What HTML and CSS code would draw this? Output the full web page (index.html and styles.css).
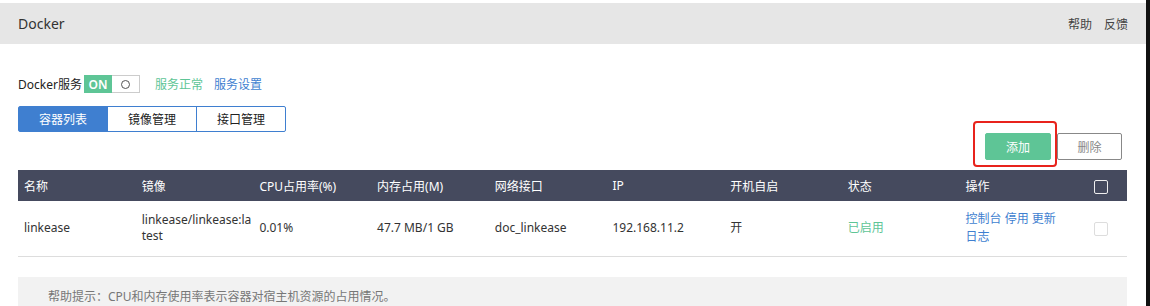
FILE: index.html
```html
<!DOCTYPE html>
<html lang="zh-CN">
<head>
    <meta charset="UTF-8">
    <title>Docker</title>
    <link rel="stylesheet" href="styles.css">
</head>
<body>
    <div class="page">
        <div class="topbar">
            <span class="topbar-title">Docker</span>
            <div class="topbar-links">
                <a>帮助</a>
                <a>反馈</a>
            </div>
        </div>

        <div class="content">
            <div class="service-row">
                <span class="service-label">Docker服务</span>
                <span class="switch">
                    <span class="switch-on">ON</span>
                    <span class="switch-off"><i class="switch-dot"></i></span>
                </span>
                <span class="service-ok">服务正常</span>
                <a class="service-link">服务设置</a>
            </div>

            <div class="tabs">
                <span class="tab active">容器列表</span>
                <span class="tab">镜像管理</span>
                <span class="tab">接口管理</span>
            </div>

            <div class="toolbar">
                <span class="btn-wrap">
                    <button class="btn btn-add">添加</button>
                    <span class="highlight"></span>
                </span>
                <button class="btn btn-del">删除</button>
            </div>

            <table class="grid">
                <thead>
                    <tr>
                        <th>名称</th>
                        <th>镜像</th>
                        <th>CPU占用率(%)</th>
                        <th>内存占用(M)</th>
                        <th>网络接口</th>
                        <th>IP</th>
                        <th>开机自启</th>
                        <th>状态</th>
                        <th>操作</th>
                        <th class="col-check"><span class="check check-head"></span></th>
                    </tr>
                </thead>
                <tbody>
                    <tr>
                        <td>linkease</td>
                        <td class="col-image">linkease/linkease:latest</td>
                        <td>0.01%</td>
                        <td>47.7 MB/1 GB</td>
                        <td>doc_linkease</td>
                        <td>192.168.11.2</td>
                        <td>开</td>
                        <td class="state-on">已启用</td>
                        <td class="col-ops"><a>控制台</a> <a>停用</a> <a>更新</a> <a>日志</a></td>
                        <td class="col-check"><span class="check"></span></td>
                    </tr>
                </tbody>
            </table>

            <div class="help-box">
                帮助提示：CPU和内存使用率表示容器对宿主机资源的占用情况。
            </div>
        </div>
    </div>
</body>
</html>
```

FILE: styles.css
```css
* {
    margin: 0;
    padding: 0;
    box-sizing: border-box;
}

body {
    font-family: 'Noto Sans', 'Noto Sans CJK SC', sans-serif;
    background: #111;
    color: #333;
    width: 1150px;
    height: 306px;
    overflow: hidden;
}

.page {
    width: 1146px;
    height: 306px;
    background: #fff;
    padding-top: 3px;
}

.topbar {
    height: 41px;
    background: #e6e6e6;
    padding: 0 18px;
    display: flex;
    align-items: center;
    justify-content: space-between;
}

.topbar-title {
    font-size: 14px;
    color: #333;
}

.topbar-links {
    display: flex;
    gap: 12px;
    font-size: 12px;
    color: #444;
}

.content {
    padding: 0 19px 0 18px;
}

.service-row {
    margin-top: 31px;
    height: 18px;
    display: flex;
    align-items: center;
    font-size: 12px;
}

.service-label {
    color: #222;
    margin-right: 2px;
}

.switch {
    display: flex;
    height: 18px;
    width: 56px;
    border: 1px solid #ccc;
}

.switch-on {
    width: 28px;
    margin: -1px 0 -1px -1px;
    background: #5ec596;
    color: #fff;
    font-size: 12px;
    font-weight: 600;
    display: flex;
    align-items: center;
    justify-content: center;
}

.switch-off {
    flex: 1;
    display: flex;
    align-items: center;
    justify-content: center;
}

.switch-dot {
    width: 9px;
    height: 9px;
    border: 1px solid #555;
    border-radius: 50%;
}

.service-ok {
    color: #5ec596;
    margin-left: 15px;
}

.service-link {
    color: #3f7fd0;
    margin-left: 11px;
}

.tabs {
    margin-top: 13px;
    display: flex;
    width: 268px;
    height: 26px;
    border: 1px solid #3f7fd0;
    border-radius: 2px;
}

.tab {
    flex: 1;
    display: flex;
    align-items: center;
    justify-content: center;
    font-size: 12px;
    color: #222;
    border-left: 1px solid #3f7fd0;
}

.tab:first-child {
    border-left: none;
}

.tab.active {
    background: #3f7fd0;
    color: #fff;
}

.toolbar {
    margin-top: 1px;
    display: flex;
    justify-content: flex-end;
    padding-right: 5px;
}

.btn {
    height: 27px;
    width: 66px;
    font-family: inherit;
    font-size: 12px;
    border-radius: 2px;
    cursor: pointer;
}

.btn-wrap {
    position: relative;
    display: flex;
}

.btn-add {
    background: #5ec596;
    border: 1px solid #5ec596;
    color: #fff;
    margin-right: 6px;
}

.btn-del {
    background: #fff;
    border: 1px solid #888;
    color: #888;
    width: 65px;
}

/* annotation box around the add button */
.highlight {
    position: absolute;
    left: -12px;
    top: -12px;
    width: 84px;
    height: 46px;
    border: 2px solid #e8231c;
    border-radius: 4px;
}

.grid {
    margin-top: 10px;
    width: 100%;
    border-collapse: collapse;
    table-layout: fixed;
    font-size: 12px;
}

.grid th {
    height: 31px;
    background: #454a5e;
    color: #fff;
    font-weight: normal;
    text-align: left;
    padding: 0 6px;
    width: 117.7px;
}

.grid td {
    height: 55px;
    padding: 0 6px;
    border-bottom: 1px solid #ddd;
    color: #333;
    line-height: 16px;
    word-break: break-all;
}

.grid .col-check {
    width: 50px;
    text-align: left;
    padding-left: 17px;
}

.col-image {
    padding-right: 2px !important;
}

.state-on {
    color: #5ec596 !important;
}

.grid .col-ops {
    word-break: normal;
    line-height: 18px;
}

.col-ops a {
    color: #3f7fd0;
    white-space: nowrap;
}

.check {
    display: inline-block;
    width: 14px;
    height: 14px;
    border: 1px solid #ddd;
    border-radius: 2px;
    background: #fff;
    vertical-align: middle;
}

.check-head {
    background: transparent;
    border-color: #eee;
}

.help-box {
    margin-top: 20px;
    height: 29px;
    background: #f2f2f2;
    padding: 13px 30px 0;
    font-size: 12px;
    line-height: 14px;
    color: #777;
}
```
